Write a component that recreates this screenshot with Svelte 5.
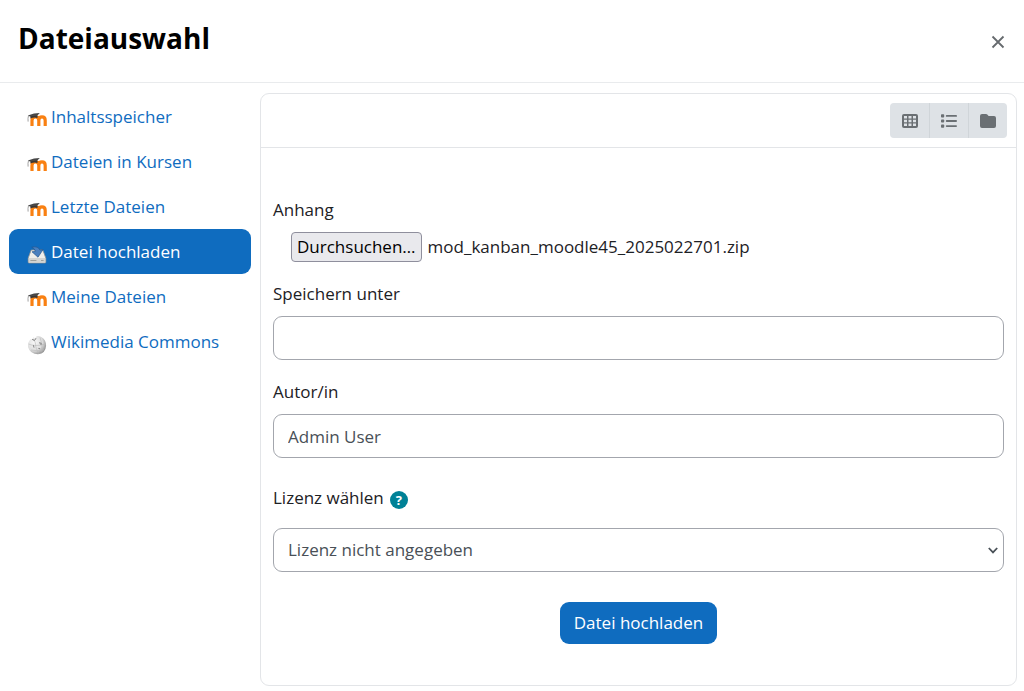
<script>
  const repositories = [
    { name: 'Inhaltsspeicher', icon: 'moodle' },
    { name: 'Dateien in Kursen', icon: 'moodle' },
    { name: 'Letzte Dateien', icon: 'moodle' },
    { name: 'Datei hochladen', icon: 'upload' },
    { name: 'Meine Dateien', icon: 'moodle' },
    { name: 'Wikimedia Commons', icon: 'wiki' }
  ];

  let active = $state('Datei hochladen');
  let fileName = $state('mod_kanban_moodle45_2025022701.zip');
  let saveAs = $state('');
  let author = $state('Admin User');
  let picker;

  function pick(event) {
    const file = event.currentTarget.files[0];
    if (file) fileName = file.name;
  }

  function choose(event, name) {
    event.preventDefault();
    active = name;
  }
</script>

<div class="dialog" role="dialog" aria-labelledby="title">
  <header>
    <h1 id="title">Dateiauswahl</h1>
    <button class="close" type="button" aria-label="Schließen">
      <svg width="14" height="14" viewBox="0 0 14 14"><path d="M1.5 1.5l11 11M12.5 1.5l-11 11" fill="none" stroke="#666a6e" stroke-width="1.8" /></svg>
    </button>
  </header>

  <div class="body">
    <nav>
      {#each repositories as repo}
        <a href="#repo" class:active={active === repo.name} onclick={(e) => choose(e, repo.name)}>
          {#if repo.icon === 'moodle'}
            <svg class="icon" viewBox="0 0 20 20" aria-hidden="true">
              <path d="M5 16V10.4Q5 6.9 8.4 6.9Q11.8 6.9 11.8 10.4V16M11.8 16V10.4Q11.8 6.900 15 6.9Q18.2 6.9 18.2 10.4V16" fill="none" stroke="#f98012" stroke-width="3.2" />
              <path d="M3.4 6.2Q7 4.3 10.6 5.8L10.4 8Q7.5 6.8 3.4 8.4Z" fill="#3a3735" />
              <path d="M.8 5.6L7 3.5L12.8 2.9L9.6 6.2Q6.6 5 3.6 6.8Z" fill="#474747" />
              <path d="M1.5 5.8Q.7 8 1.1 11.6" fill="none" stroke="#999" stroke-width=".9" />
            </svg>
          {:else if repo.icon === 'upload'}
            <svg class="icon" viewBox="0 0 20 20" aria-hidden="true">
              <path d="M4.2 5h11.6l3 8v4.2q0 .8-.8.8H2q-.8 0-.8-.8V13Z" fill="#eeeeeb" stroke="#8b8f91" stroke-width=".8" />
              <path d="M1.7 13h16.600v4.4H1.7Z" fill="#d3d4d2" />
              <path d="M3.4 15.5h6M14 15.5h2.6" stroke="#969894" stroke-width=".9" />
              <path d="M4.8 2.2Q11.2.8 13 5.2L16 4.6L11 12.2L5 6.8L8.4 6.4Q8 3.6 4.8 2.2Z" fill="#4a80bf" stroke="#24568f" stroke-width=".7" />
            </svg>
          {:else}
            <svg class="icon" viewBox="0 0 20 20" aria-hidden="true">
              <defs>
                <radialGradient id="globe" cx=".35" cy=".35" r=".75">
                  <stop offset="0" stop-color="#f8f8f8" />
                  <stop offset=".6" stop-color="#dcdcdc" />
                  <stop offset="1" stop-color="#858585" />
                </radialGradient>
              </defs>
              <path d="M3.6 4.2L5.4 4.4L6.3 2.2L8.2 3.3L9.6 1.2Q12 .7 14.6 2.2Q19.2 5 19.1 10.7Q18.5 18.5 11 19.3Q3.2 19.1 1.1 12.2Q.3 7.4 3.6 4.2Z" fill="url(#globe)" />
              <path d="M5 4Q9 6 8.6 9.2T12 19M1.5 9Q8 12 18.8 9M4 15Q10 16.5 17 14.7M13 2.4Q16 9 14.8 17.5" fill="none" stroke="#b9b9b9" stroke-width=".6" />
              <path d="M5.2 4.4L7.6 5.4L9 3.2M12 7.8l2.2.4-.3 1.8M6.4 10.2l.6 2.4M11.4 13.4l1.8.4" fill="none" stroke="#777" stroke-width=".9" />
            </svg>
          {/if}
          <span>{repo.name}</span>
        </a>
      {/each}
    </nav>

    <main>
      <div class="toolbar">
        <div class="views" role="group" aria-label="Ansicht">
          <button type="button" aria-label="Symbole">
            <svg width="16" height="14" viewBox="0 0 16 14">
              <rect width="16" height="14" rx="2" fill="#6a6f73" />
              <path d="M2 2h3v2.4H2ZM6.5 2h3v2.4h-3ZM11 2h3v2.4h-3ZM2 5.8h3v2.4H2ZM6.5 5.8h3v2.4h-3ZM11 5.8h3v2.4h-3ZM2 9.6h3V12H2ZM6.5 9.6h3V12h-3ZM11 9.6h3V12h-3Z" fill="#dee2e6" />
            </svg>
          </button>
          <button type="button" aria-label="Liste">
            <svg width="16" height="14" viewBox="0 0 16 14" fill="#6a6f73">
              <rect width="3.2" height="3.2" rx=".8" y=".3" /><rect width="3.2" height="3.2" rx=".8" y="5.4" /><rect width="3.2" height="3.2" rx=".8" y="10.5" />
              <rect x="4.8" y="1" width="11.2" height="1.8" rx=".9" /><rect x="4.8" y="6.1" width="11.2" height="1.8" rx=".9" /><rect x="4.8" y="11.2" width="11.2" height="1.8" rx=".9" />
            </svg>
          </button>
          <button type="button" aria-label="Ordner">
            <svg width="16" height="14" viewBox="0 0 16 14"><path d="M2 0h4q.8 0 1.3.6l.8.8q.5.6 1.3.6H14q2 0 2 2v8q0 2-2 2H2q-2 0-2-2V2Q0 0 2 0Z" fill="#6a6f73" /></svg>
          </button>
        </div>
      </div>

      <form onsubmit={(e) => e.preventDefault()}>
        <label for="file">Anhang</label>
        <div class="file">
          <button type="button" onclick={() => picker.click()}>Durchsuchen…</button>
          <span>{fileName}</span>
          <input id="file" type="file" tabindex="-1" bind:this={picker} onchange={pick} />
        </div>

        <label for="save-as">Speichern unter</label>
        <input class="control" id="save-as" type="text" bind:value={saveAs} />

        <label for="author">Autor/in</label>
        <input class="control" id="author" type="text" bind:value={author} />

        <div class="license">
          <label for="license">Lizenz wählen</label>
          <button type="button" aria-label="Hilfe zu Lizenz wählen">?</button>
        </div>
        <div class="select">
          <select class="control" id="license">
            <option>Lizenz nicht angegeben</option>
          </select>
          <svg width="10" height="7" viewBox="0 0 10 7" aria-hidden="true"><path d="M.8 1L5 5.4L9.2 1" fill="none" stroke="#495057" stroke-width="1.8" /></svg>
        </div>

        <button class="submit" type="submit">Datei hochladen</button>
      </form>
    </main>
  </div>
</div>

<style>
  :global(body) {
    background: #fff;
  }

  .dialog,
  .dialog :is(button, input, select) {
    font-family: 'Open Sans', 'Noto Sans', sans-serif;
    font-size: 17px;
    line-height: 24px;
  }

  .dialog {
    box-sizing: border-box;
    min-height: 100vh;
    display: flex;
    flex-direction: column;
    color: #1d2125;
  }

  .dialog * {
    box-sizing: border-box;
  }

  button {
    padding: 0;
    border: 0;
    cursor: pointer;
  }

  header {
    display: flex;
    align-items: center;
    justify-content: space-between;
    height: 83px;
    padding: 0 12px 6px 18px;
    border-bottom: 1px solid #e9ebed;
  }

  h1 {
    margin: 0;
    color: #000;
    font-size: 28px;
    line-height: 40px;
    font-weight: 700;
  }

  .close {
    display: grid;
    place-items: center;
    width: 28px;
    height: 28px;
    margin-top: 8px;
    background: none;
  }

  .body {
    flex: 1;
    display: grid;
    grid-template-columns: 242px minmax(0, 1fr);
    gap: 9px;
    padding: 10px 7px 5px 9px;
  }

  nav {
    display: flex;
    flex-direction: column;
    padding-top: 1px;
  }

  nav a {
    display: flex;
    align-items: center;
    gap: 4px;
    height: 45px;
    padding-left: 18px;
    border-radius: 9px;
    color: #0f6cbf;
    text-decoration: none;
  }

  nav a.active {
    background: #0f6cbf;
    color: #fff;
  }

  .icon {
    width: 20px;
    height: 20px;
    margin-top: 6px;
  }

  main {
    border: 1px solid #e3e5e8;
    border-radius: 9px;
  }

  .toolbar {
    display: flex;
    justify-content: flex-end;
    padding: 9px;
    border-bottom: 1px solid #e3e5e8;
  }

  .views {
    display: flex;
    border-radius: 4px;
    overflow: hidden;
  }

  .views button {
    display: grid;
    place-items: center;
    width: 39px;
    height: 35px;
    background: #dee2e6;
  }

  .views button + button {
    border-left: 1px solid #d0d5d9;
  }

  form {
    display: flex;
    flex-direction: column;
    padding: 50px 12px 40px;
  }

  .file {
    display: flex;
    align-items: center;
    gap: 6px;
    margin: 10px 0 20px 18px;
    position: relative;
  }

  .file button {
    height: 30px;
    padding: 0 5px;
    border: 1px solid #8f8f9d;
    border-radius: 4px;
    background: #e9e9ed;
    color: #000;
  }

  .file input {
    position: absolute;
    width: 1px;
    height: 1px;
    opacity: 0;
    pointer-events: none;
  }

  .control {
    width: 100%;
    height: 44px;
    margin: 10px 0 20px;
    padding: 0 14px;
    border: 1px solid #a3a6ad;
    border-radius: 9px;
    background: #fff;
    color: #495057;
  }

  .license {
    display: flex;
    align-items: center;
    gap: 6px;
    margin-top: 8px;
  }

  .license button {
    width: 18px;
    height: 18px;
    margin-top: 4px;
    border-radius: 50%;
    background: #008196;
    color: #fff;
    font-size: 13px;
    line-height: 18px;
    font-weight: 700;
  }

  .select {
    display: grid;
    align-items: center;
    position: relative;
    margin: 18px 0 30px;
  }

  .select select {
    margin: 0;
    appearance: none;
  }

  .select svg {
    position: absolute;
    right: 6px;
    pointer-events: none;
  }

  .submit {
    align-self: center;
    height: 42px;
    padding: 0 14px;
    border-radius: 9px;
    background: #0f6cbf;
    color: #fff;
  }
</style>
